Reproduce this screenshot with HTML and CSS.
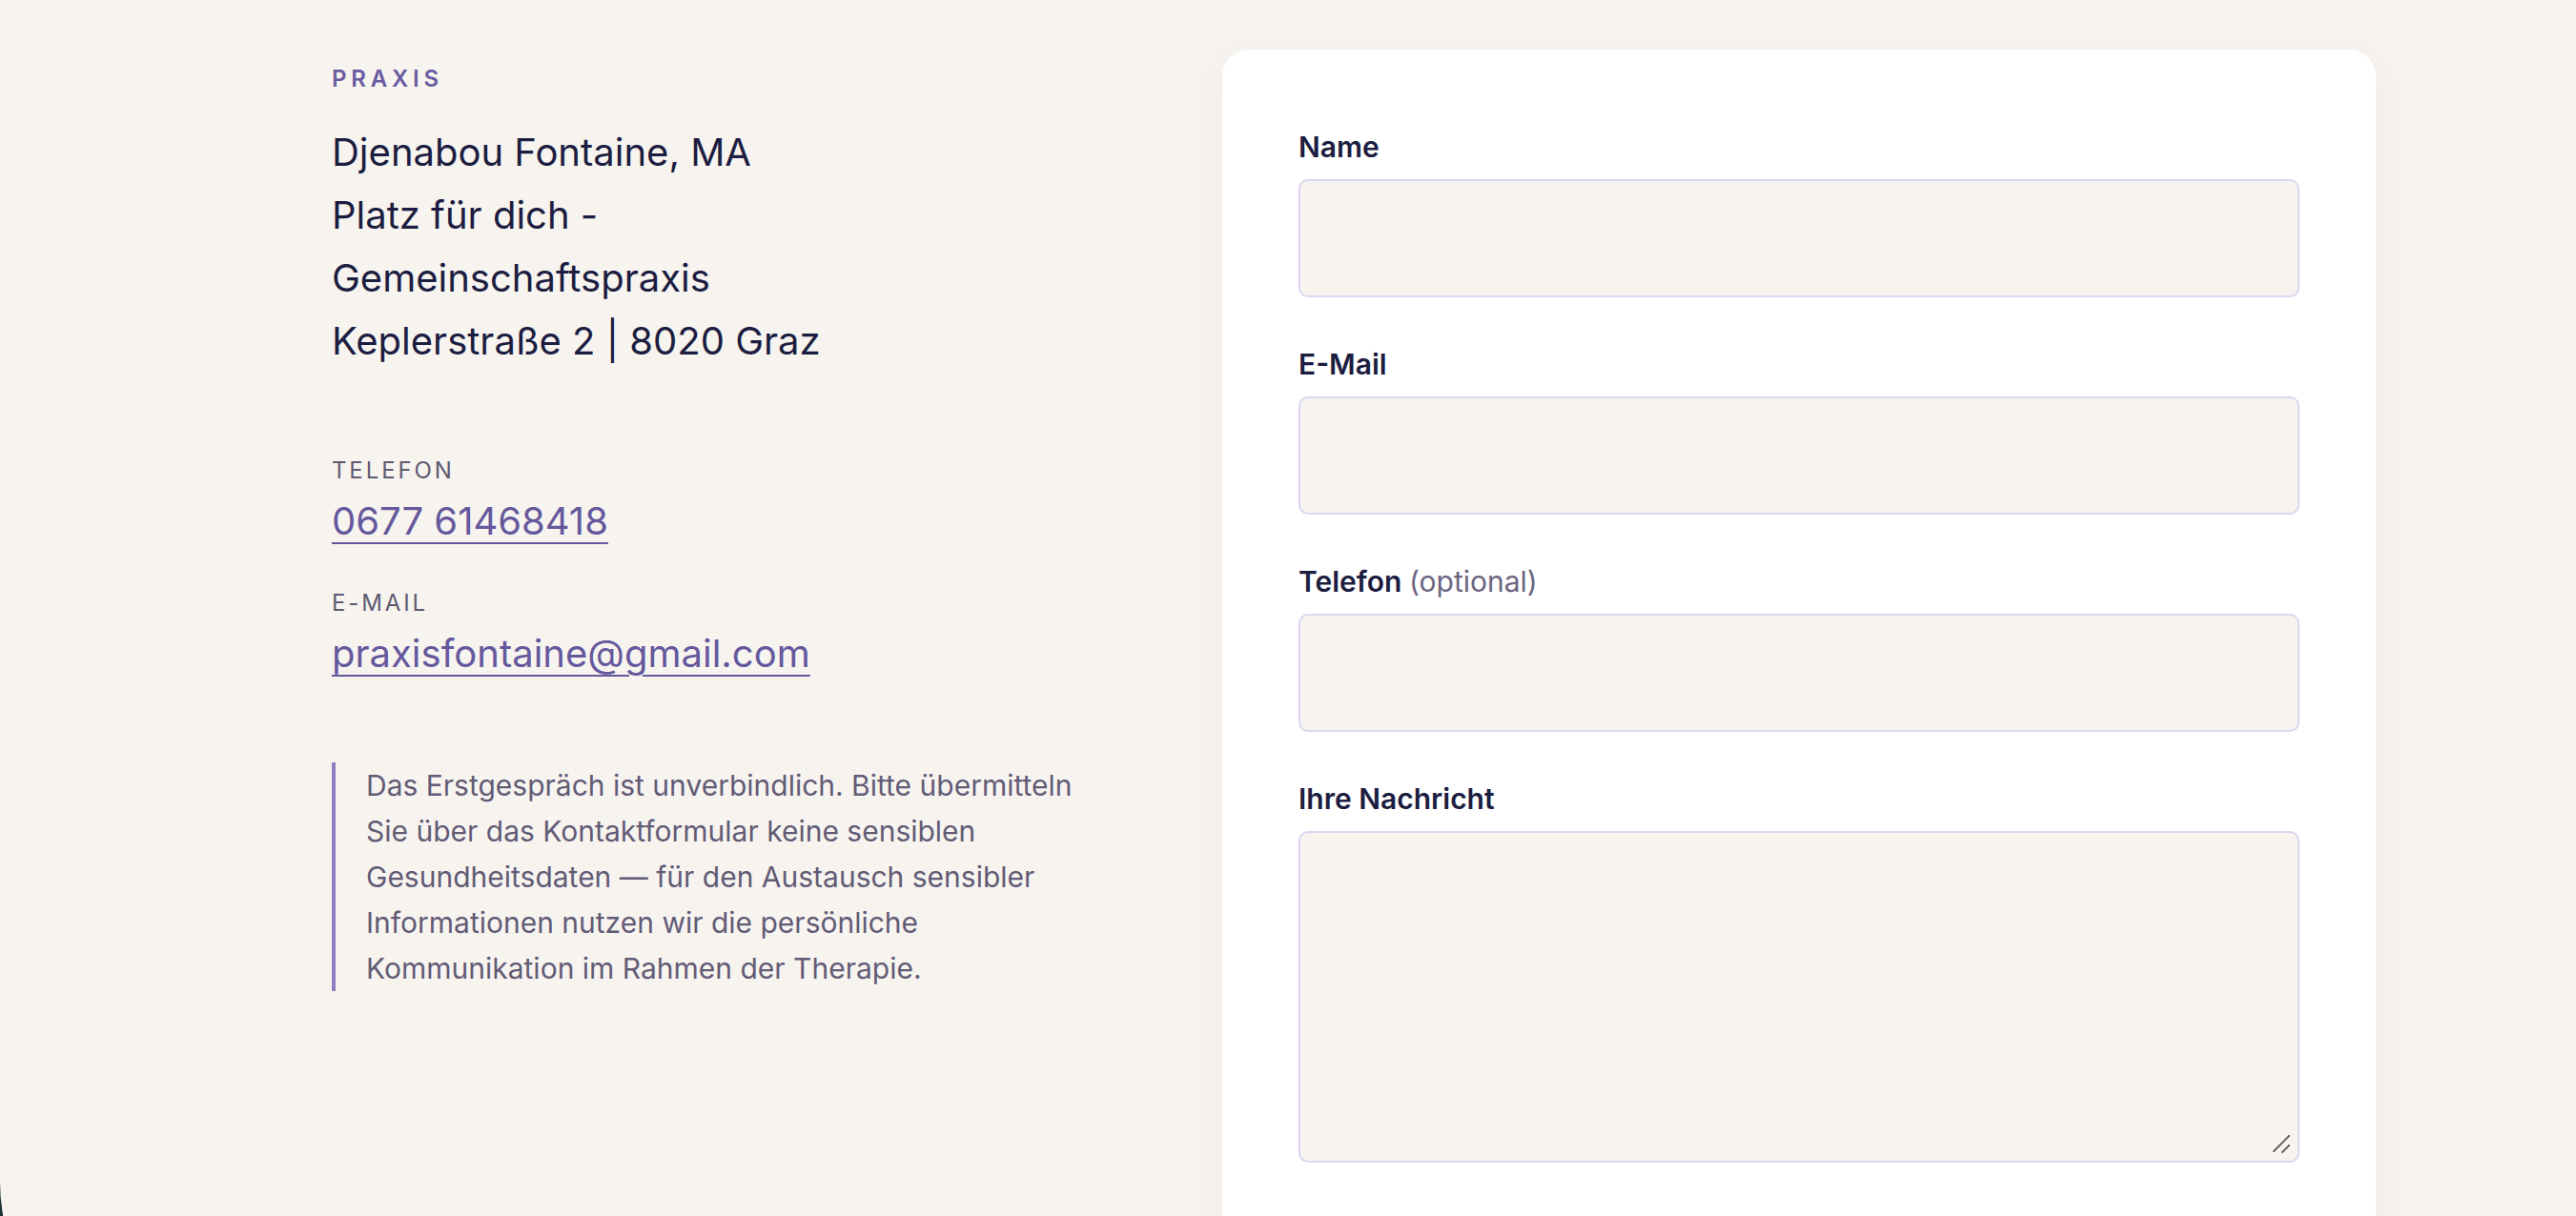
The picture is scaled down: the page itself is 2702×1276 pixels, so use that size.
FILE: index.html
```html
<!DOCTYPE html>
<html lang="de">
<head>
    <meta charset="UTF-8">
    <meta name="viewport" content="width=device-width, initial-scale=1.0">
    <title>Kontakt – Praxis Fontaine</title>
    <link rel="stylesheet" href="styles.css">
</head>
<body>
    <section class="contact">
        <div class="contact-grid">
            <div class="contact-info">
                <p class="eyebrow">Praxis</p>
                <address class="practice">
                    Djenabou Fontaine, MA<br>
                    Platz für dich -<br>
                    Gemeinschaftspraxis<br>
                    Keplerstraße 2 | 8020 Graz
                </address>

                <div class="contact-item">
                    <span class="item-label">Telefon</span>
                    <a class="item-link" href="tel:067761468418">0677 61468418</a>
                </div>
                <div class="contact-item">
                    <span class="item-label">E-Mail</span>
                    <a class="item-link" href="mailto:praxisfontaine@gmail.com">praxisfontaine@gmail.com</a>
                </div>

                <blockquote class="notice">
                    Das Erstgespräch ist unverbindlich. Bitte übermitteln Sie über das Kontaktformular keine sensiblen Gesundheitsdaten — für den Austausch sensibler Informationen nutzen wir die persönliche Kommunikation im Rahmen der Therapie.
                </blockquote>
            </div>

            <form class="contact-card" onsubmit="return false;">
                <div class="field">
                    <label for="name">Name</label>
                    <input type="text" id="name" name="name">
                </div>
                <div class="field">
                    <label for="email">E-Mail</label>
                    <input type="email" id="email" name="email">
                </div>
                <div class="field">
                    <label for="phone">Telefon <span class="optional">(optional)</span></label>
                    <input type="tel" id="phone" name="phone">
                </div>
                <div class="field">
                    <label for="message">Ihre Nachricht</label>
                    <div class="textarea-wrap">
                        <textarea id="message" name="message"></textarea>
                    </div>
                </div>
            </form>
        </div>
    </section>
</body>
</html>
```

FILE: styles.css
```css
* {
    margin: 0;
    padding: 0;
    box-sizing: border-box;
}

html {
    background: #1c3435;
}

body {
    font-family: Inter, 'Noto Sans', sans-serif;
    color: #1c1d40;
}

.contact {
    background: #f7f4f0;
    min-height: 1440px;
    padding: 52px 0 0 348px;
    border-bottom-left-radius: 200px;
}

.contact-grid {
    display: grid;
    grid-template-columns: 806px 1210px;
    gap: 128px;
    align-items: start;
}

.contact-info {
    padding-top: 17px;
}

.eyebrow {
    font-size: 24px;
    line-height: 28px;
    font-weight: 600;
    letter-spacing: 0.2em;
    text-transform: uppercase;
    color: #6a5c9f;
}

.practice {
    margin-top: 30px;
    font-style: normal;
    font-size: 40px;
    line-height: 66px;
    color: #1c1d40;
}

.contact-item {
    display: flex;
    flex-direction: column;
    align-items: flex-start;
    gap: 8px;
}

.practice + .contact-item {
    margin-top: 86px;
}

.contact-item + .contact-item {
    margin-top: 42px;
}

.item-label {
    font-size: 24px;
    line-height: 34px;
    letter-spacing: 0.12em;
    text-transform: uppercase;
    color: #5f5a70;
}

.item-link {
    font-size: 40px;
    line-height: 55px;
    color: #65589c;
    text-decoration: underline;
    text-decoration-thickness: 2px;
    text-underline-offset: 8px;
}

.notice {
    margin-top: 87px;
    border-left: 4px solid #8d80c2;
    padding-left: 32px;
    font-size: 30px;
    line-height: 48px;
    color: #625b75;
}

.contact-card {
    background: #ffffff;
    border-radius: 28px;
    padding: 80px 80px 120px;
    box-shadow: 0 10px 40px rgba(60, 40, 100, 0.05);
    display: flex;
    flex-direction: column;
    gap: 48px;
}

.field label {
    display: block;
    margin-bottom: 12px;
    font-size: 30px;
    line-height: 44px;
    font-weight: 600;
    color: #1c1d40;
}

.optional {
    font-weight: 400;
    color: #6b6580;
}

.field input,
.field textarea {
    display: block;
    width: 100%;
    height: 124px;
    background: #f7f4f0;
    border: 2px solid #ded5ef;
    border-radius: 10px;
    padding: 20px 24px;
    font-family: inherit;
    font-size: 30px;
    color: #1c1d40;
}

.field textarea {
    height: 348px;
    resize: vertical;
}

.field input:focus,
.field textarea:focus {
    outline: none;
    border-color: #8d80c2;
}

/* native grip is tiny at 1x, draw our own over the corner */
.textarea-wrap {
    position: relative;
}

.textarea-wrap textarea::-webkit-resizer {
    background: transparent;
}

.textarea-wrap::after {
    content: "";
    position: absolute;
    right: 9px;
    bottom: 9px;
    width: 20px;
    height: 20px;
    pointer-events: none;
    background:
        linear-gradient(135deg, transparent calc(50% - 1.3px), #6e6e6e calc(50% - 1.3px), #6e6e6e calc(50% + 1.3px), transparent calc(50% + 1.3px)) 1px 0 / 18px 18px no-repeat,
        linear-gradient(135deg, transparent calc(50% - 1.3px), #6e6e6e calc(50% - 1.3px), #6e6e6e calc(50% + 1.3px), transparent calc(50% + 1.3px)) 10px 10px / 9px 9px no-repeat;
}
```
